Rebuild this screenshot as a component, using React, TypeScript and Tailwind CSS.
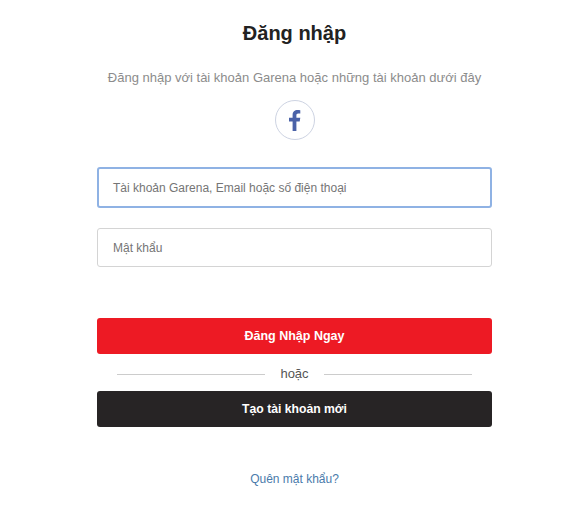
import React from "react";

function FacebookButton() {
  return (
    <button className="w-10 h-10 rounded-full border border-[#cdd3e2] flex items-center justify-center bg-white">
      <svg width="13" height="22" viewBox="0 0 13 22">
        <path
          fill="#4a62a8"
          d="M8.4 22V12.6h3.3l.6-3.8H8.4V6.5c0-1.1.4-1.9 1.9-1.9h2V1.2C11.9 1.1 10.8 1 9.6 1 6.7 1 4.6 2.8 4.6 6v2.8H1v3.8h3.6V22z"
        />
      </svg>
    </button>
  );
}

export default function App() {
  return (
    <div className="w-[582px] h-[520px] bg-white overflow-hidden font-['Liberation_Sans',Arial,sans-serif]">
      <div className="w-[395px] ml-[97px] flex flex-col">
        <h1 className="mt-[20px] h-[26px] leading-[26px] text-center text-[20px] font-bold text-[#222222]">
          Đăng nhập
        </h1>
        <p className="mt-[23px] h-[18px] leading-[18px] text-center text-[13px] whitespace-nowrap text-[#8c8c8c]">
          Đăng nhập với tài khoản Garena hoặc những tài khoản dưới đây
        </p>
        <div className="mt-[13px] flex justify-center">
          <FacebookButton />
        </div>
        <div className="mt-[27px] h-[41px] rounded-[3px] border-2 border-[#8fb2e4] flex items-center pl-[14px] text-[12px] text-[#757575]">
          Tài khoản Garena, Email hoặc số điện thoại
        </div>
        <div className="mt-[20px] h-[39px] rounded-[3px] border border-[#d4d4d4] flex items-center pl-[15px] text-[12px] text-[#757575]">
          Mật khẩu
        </div>
        <button className="mt-[51px] h-[36px] rounded-[3px] bg-[#ed1a24] text-white text-[12.5px] font-bold">
          Đăng Nhập Ngay
        </button>
        <div className="h-[37px] px-[20px] pt-[3px] flex items-center gap-[15px]">
          <div className="flex-1 h-px bg-[#cccccc]" />
          <span className="-mt-[1px] text-[13px] text-[#555555]">hoặc</span>
          <div className="flex-1 h-px bg-[#cccccc]" />
        </div>
        <button className="h-[36px] rounded-[3px] bg-[#272425] text-white text-[12.2px] font-bold">
          Tạo tài khoản mới
        </button>
        <a className="mt-[44px] h-[16px] leading-[16px] text-center text-[12px] text-[#4a7bab]">
          Quên mật khẩu?
        </a>
      </div>
    </div>
  );
}
